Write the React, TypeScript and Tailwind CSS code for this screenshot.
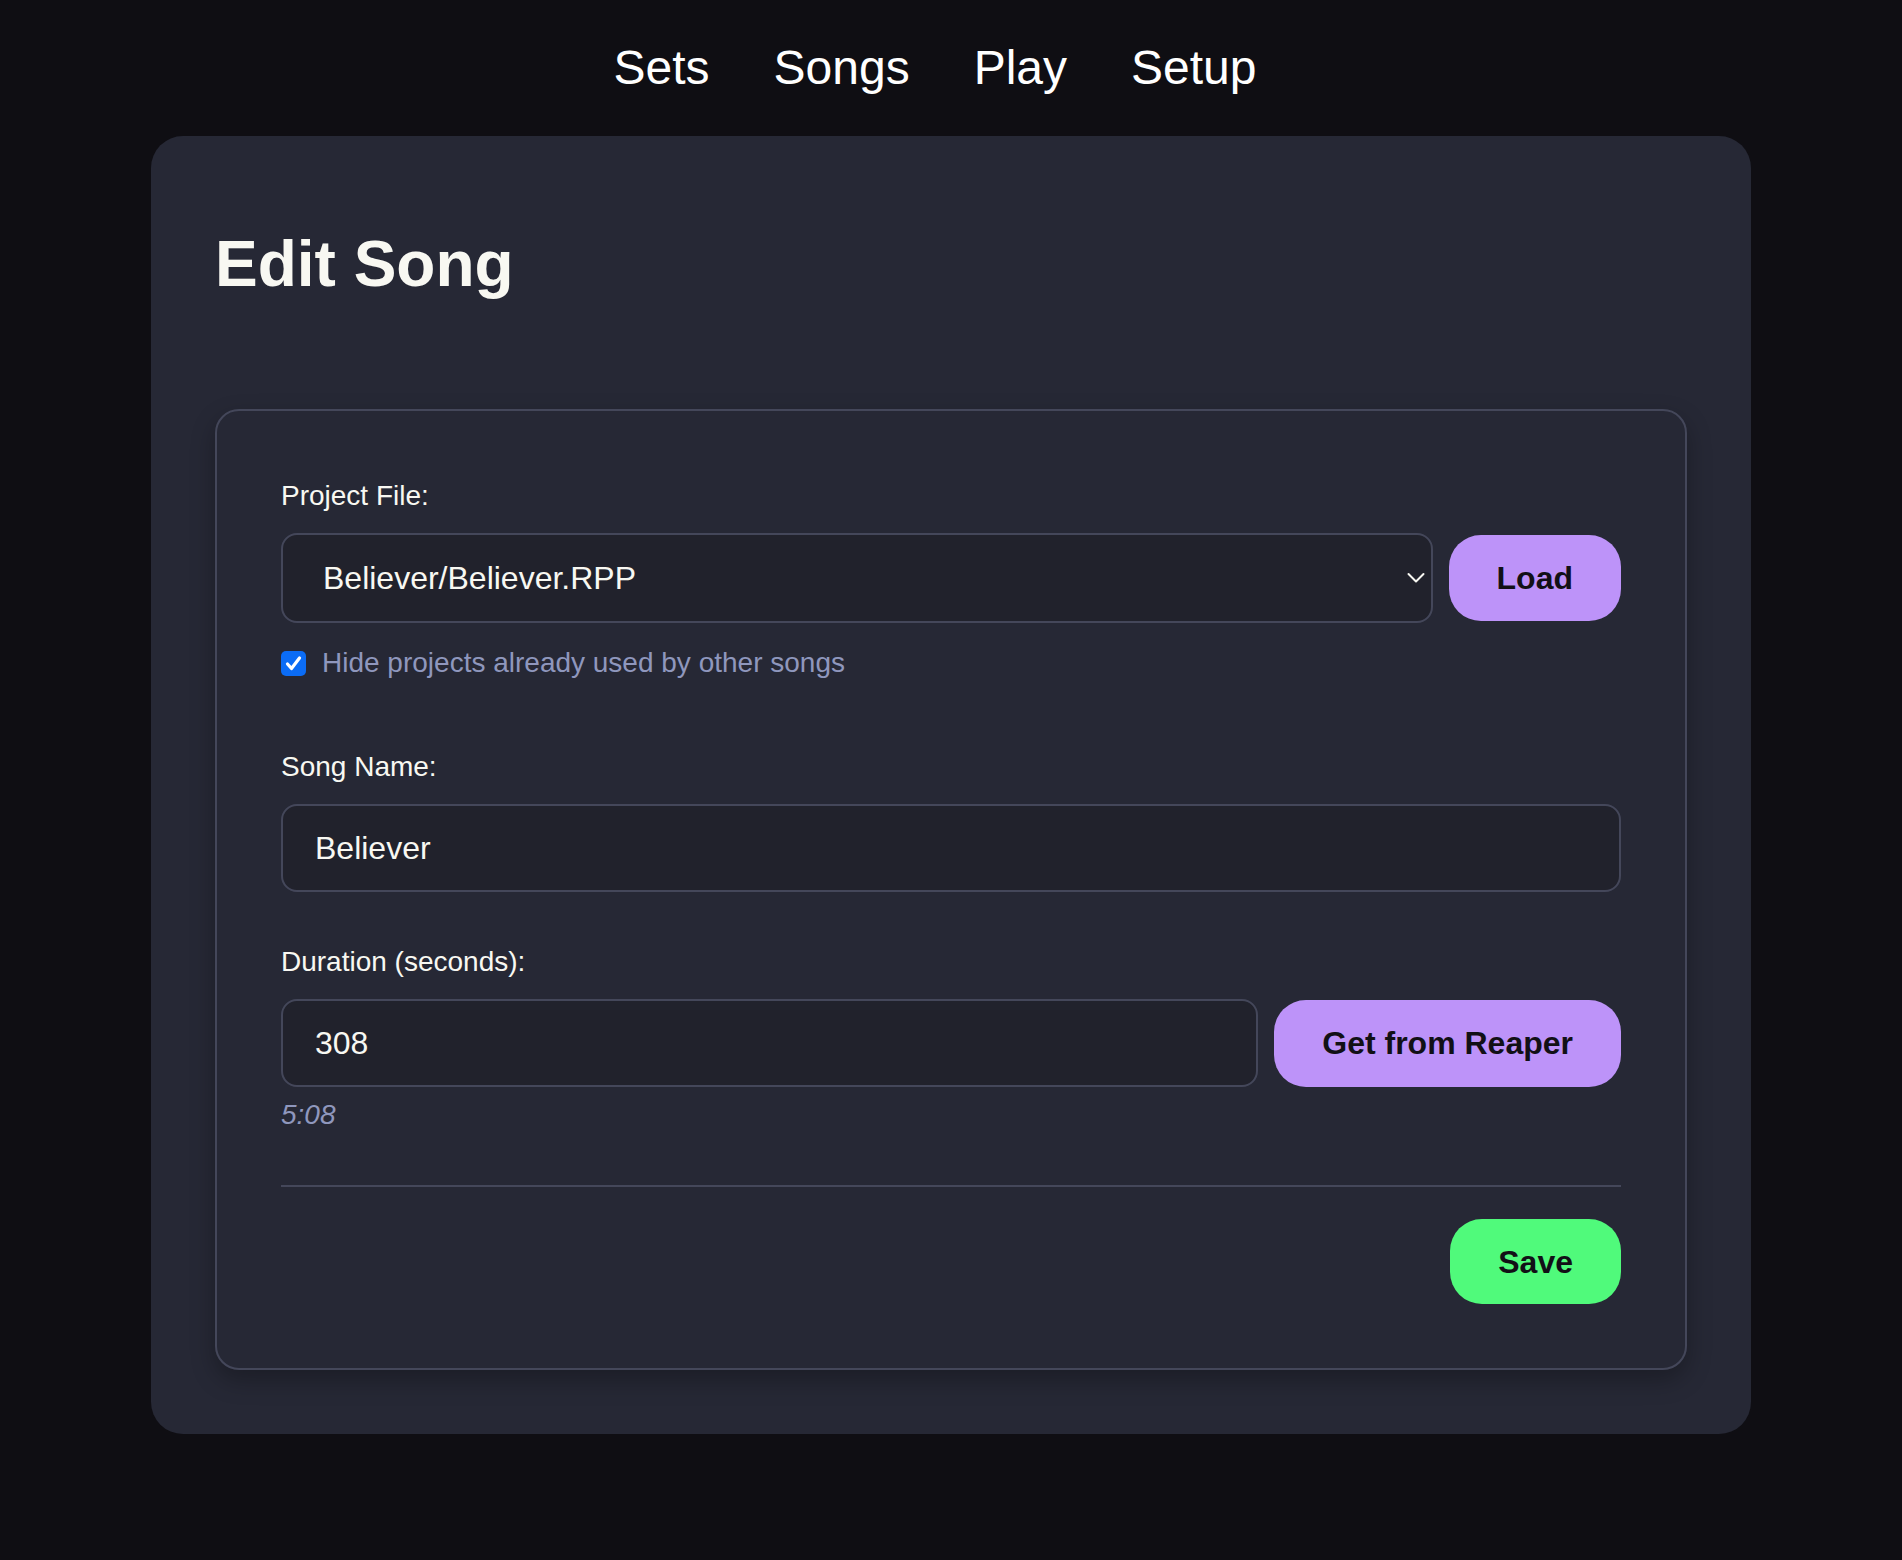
import React, { useState } from 'react';

const navItems = ['Sets', 'Songs', 'Play', 'Setup'];

function formatDuration(sec: number) {
    const m = Math.floor(sec / 60);
    const s = sec % 60;
    return `${m}:${s.toString().padStart(2, '0')}`;
}

export default function App() {
    const [project, setProject] = useState('Believer/Believer.RPP');
    const [hideUsed, setHideUsed] = useState(true);
    const [name, setName] = useState('Believer');
    const [duration, setDuration] = useState('308');

    return (
        <div className="min-h-screen bg-[#0f0e13] font-['Liberation_Sans',Arial,sans-serif] text-[#f8f8f2]">
            <nav className="flex justify-center gap-8 py-8">
                {navItems.map((item) => (
                    <a key={item} href="#" className="mr-8 text-[48px] leading-[72px] text-white">
                        {item}
                    </a>
                ))}
            </nav>

            <main className="mx-auto w-[1600px] rounded-[32px] bg-[#262835] px-16 pt-16 pb-16">
                <h1 className="mt-[27px] text-[64px] font-bold leading-[74px] text-[#f8f8f2]">Edit Song</h1>

                <section className="mt-[108px] rounded-[24px] border-2 border-[#44475a] p-16 shadow-[0_10px_24px_rgba(0,0,0,0.28)]">
                    {/* project file */}
                    <label className="block text-[28px] leading-[42px]">Project File:</label>
                    <div className="mt-4 flex items-center gap-4">
                        <div className="relative flex-1">
                            <select
                                value={project}
                                onChange={(e) => setProject(e.target.value)}
                                className="h-[90px] w-full appearance-none rounded-2xl border-2 border-[#44475a] bg-[#21222c] pl-10 pr-12 text-[32px] text-[#f8f8f2] outline-none"
                            >
                                <option>Believer/Believer.RPP</option>
                            </select>
                            <svg className="pointer-events-none absolute right-[8px] top-1/2 -translate-y-1/2" width="18" height="11" viewBox="0 0 18 11" fill="none">
                                <path d="M1.5 1.5 L9 9 L16.5 1.5" stroke="#f8f8f2" strokeWidth="2" strokeLinecap="round" strokeLinejoin="round" />
                            </svg>
                        </div>
                        <button className="h-[86px] rounded-[32px] bg-[#bd93f9] px-12 text-[32px] font-bold text-[#121016]">Load</button>
                    </div>
                    <div className="mt-[19px] flex h-[42px] items-center" onClick={() => setHideUsed(!hideUsed)}>
                        <span className={`flex h-[25px] w-[25px] items-center justify-center rounded-[5px] ${hideUsed ? 'bg-[#0b6cf5]' : 'border-2 border-[#8f97bd]'}`}>
                            {hideUsed && (
                                <svg width="19" height="19" viewBox="0 0 19 19" fill="none">
                                    <path d="M3.5 10 L7.5 14.5 L15.5 4" stroke="white" strokeWidth="3.2" strokeLinecap="round" strokeLinejoin="round" />
                                </svg>
                            )}
                        </span>
                        <span className="ml-4 text-[28px] leading-[42px] text-[#8f97bd]">Hide projects already used by other songs</span>
                    </div>

                    {/* song name */}
                    <label className="mt-[62px] block text-[28px] leading-[42px]">Song Name:</label>
                    <input
                        value={name}
                        onChange={(e) => setName(e.target.value)}
                        className="mt-4 block h-[88px] w-full rounded-2xl border-2 border-[#44475a] bg-[#21222c] px-8 text-[32px] text-[#f8f8f2] outline-none"
                    />

                    {/* duration */}
                    <label className="mt-[49px] block text-[28px] leading-[42px]">Duration (seconds):</label>
                    <div className="mt-4 flex items-center gap-4">
                        <input
                            value={duration}
                            onChange={(e) => setDuration(e.target.value)}
                            className="block h-[88px] min-w-0 flex-1 rounded-2xl border-2 border-[#44475a] bg-[#21222c] px-8 text-[32px] text-[#f8f8f2] outline-none"
                        />
                        <button className="h-[87px] rounded-[32px] bg-[#bd93f9] px-12 text-[32px] font-bold text-[#121016]">Get from Reaper</button>
                    </div>
                    <p className="mt-[7px] text-[28px] italic leading-[42px] text-[#8f97bd]">{formatDuration(parseInt(duration) || 0)}</p>

                    <div className="mt-[49px] flex justify-end border-t-2 border-[#44475a] pt-8">
                        <button className="h-[85px] rounded-[32px] bg-[#50fa7b] px-12 text-[32px] font-bold text-[#121016]">Save</button>
                    </div>
                </section>
            </main>
        </div>
    );
}
